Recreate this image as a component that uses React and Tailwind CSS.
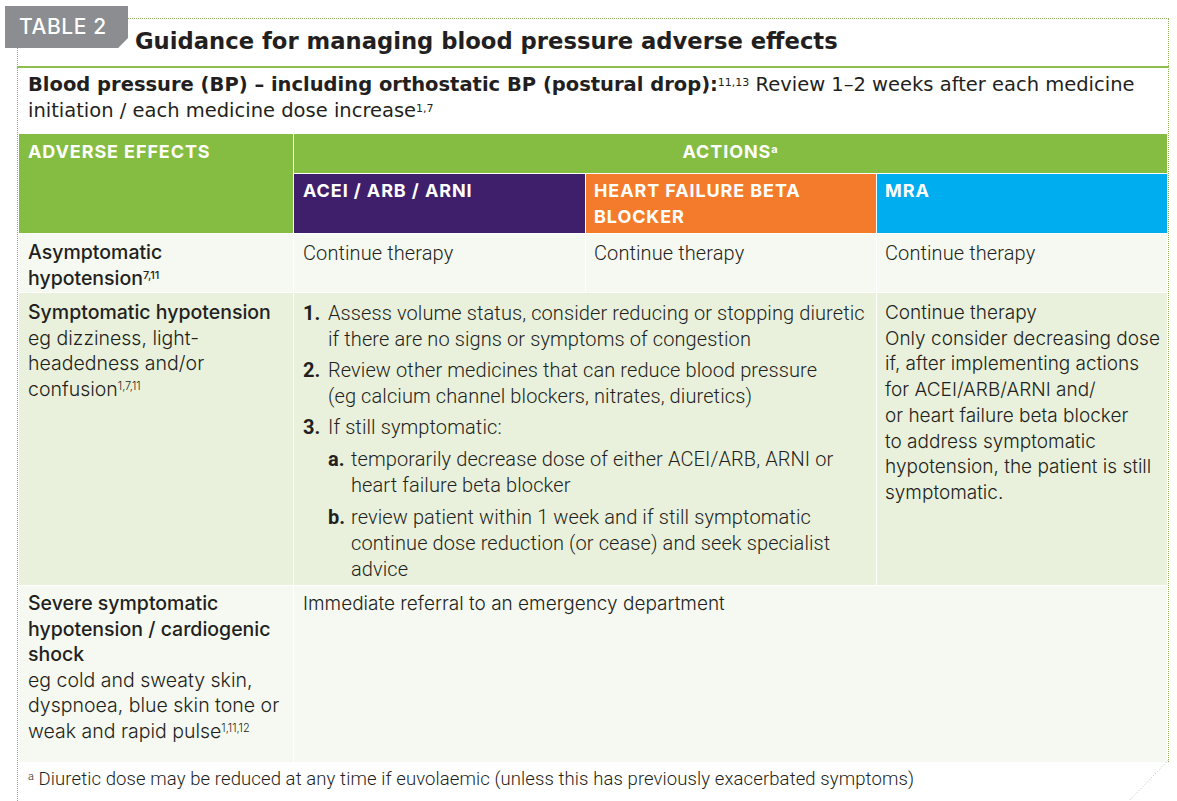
const W = "[font-family:Inter,sans-serif]";
const D = "[font-family:'DejaVu_Sans',sans-serif]";
const N = "[font-family:Roboto,sans-serif]";
const H = "[font-family:Inter,sans-serif] font-bold text-[18px] tracking-[0.9px] leading-[26px] text-white";

function Sup({ children, className = "" }) {
  return <sup className={"text-[11px] " + className}>{children}</sup>;
}

function Item({ num, children, sub = false }) {
  return (
    <div className={sub ? "flex mt-[6px] pl-[25px]" : "flex mt-[5px] first:mt-0"}>
      <div className={sub ? "w-[23px] shrink-0 font-bold" : "w-[25px] shrink-0 font-bold"}>{num}</div>
      <div className="whitespace-nowrap">{children}</div>
    </div>
  );
}

export default function App() {
  return (
    <div className="relative w-[1177px] h-[801px] bg-white overflow-hidden text-[#231f20]">
      <div className="pt-[18px]">
        <div className="ml-[17px] w-[1152px] h-[783px] border-l border-dotted border-[#8fb35e]">
          <div className="w-[1151px] border-t border-r border-dotted border-[#8fb35e]">
            <div className={"h-[47px] pl-[117px] pt-[8px] text-[22.7px] leading-[28px] font-bold whitespace-nowrap " + D}>
              Guidance for managing blood pressure adverse effects
            </div>
            <div className="h-[2px] bg-[#8dbf4e] -ml-px -mr-px"></div>
            <div className={"pt-[4px] pl-[10px] text-[19.5px] leading-[26px] whitespace-nowrap " + D}>
              <span className="font-bold">Blood pressure (BP) – including orthostatic BP (postural drop):</span>
              <Sup>11,13</Sup>
              <span className="font-normal"> Review 1–2 weeks after each medicine</span>
              <br />
              <span className="font-normal">initiation / each medicine dose increase</span>
              <Sup>1,7</Sup>
            </div>
            <div className="mt-[10px] ml-px w-[1148px] grid grid-cols-[274px_291px_290px_290px] grid-rows-[39px_59px_58px_292px_176px] gap-x-px gap-y-px">
              <div className={"row-span-2 bg-[#84bd41] pl-[9px] pt-[5px] " + H}>ADVERSE EFFECTS</div>
              <div className={"col-span-3 bg-[#84bd41] pt-[5px] text-center " + H}>
                ACTIONS<Sup className="font-bold">a</Sup>
              </div>
              <div className={"bg-[#3f1f6b] pl-[9px] pt-[4px] " + H}>ACEI / ARB / ARNI</div>
              <div className={"bg-[#f47b2b] pl-[8px] pt-[4px] " + H}>
                HEART FAILURE BETA
                <br />
                BLOCKER
              </div>
              <div className={"bg-[#00adef] pl-[8px] pt-[4px] " + H}>MRA</div>

              <div className={"bg-[#f6f9f1] pl-[9px] pt-[6px] text-[19.5px] leading-[25.5px] font-medium " + W}>
                Asymptomatic
                <br />
                hypotension<Sup>7,11</Sup>
              </div>
              <div className={"bg-[#f6f9f1] pl-[9px] pt-[6px] text-[20px] tracking-[0.1px] leading-[26px] font-light " + N}>Continue therapy</div>
              <div className={"bg-[#f6f9f1] pl-[8px] pt-[6px] text-[20px] tracking-[0.1px] leading-[26px] font-light " + N}>Continue therapy</div>
              <div className={"bg-[#f6f9f1] pl-[8px] pt-[6px] text-[20px] tracking-[0.1px] leading-[26px] font-light " + N}>Continue therapy</div>

              <div className={"bg-[#e9f1dd] pl-[9px] pt-[7px] text-[19.5px] leading-[25.6px] " + W}>
                <div className="font-medium">Symptomatic hypotension</div>
                <div className="font-light">
                  eg dizziness, light-
                  <br />
                  headedness and/or
                  <br />
                  confusion<Sup>1,7,11</Sup>
                </div>
              </div>
              <div className={"col-span-2 bg-[#e9f1dd] pl-[9px] pt-[7px] text-[20px] tracking-[0.1px] leading-[26px] font-light " + N}>
                <Item num="1.">
                  Assess volume status, consider reducing or stopping diuretic
                  <br />
                  if there are no signs or symptoms of congestion
                </Item>
                <Item num="2.">
                  Review other medicines that can reduce blood pressure
                  <br />
                  (eg calcium channel blockers, nitrates, diuretics)
                </Item>
                <Item num="3.">If still symptomatic:</Item>
                <Item num="a." sub>
                  temporarily decrease dose of either ACEI/ARB, ARNI or
                  <br />
                  heart failure beta blocker
                </Item>
                <Item num="b." sub>
                  review patient within 1 week and if still symptomatic
                  <br />
                  continue dose reduction (or cease) and seek specialist
                  <br />
                  advice
                </Item>
              </div>
              <div className={"bg-[#e9f1dd] pl-[8px] pt-[7px] text-[19px] leading-[25.7px] font-light whitespace-nowrap " + W}>
                Continue therapy
                <br />
                Only consider decreasing dose
                <br />
                if, after implementing actions
                <br />
                for ACEI/ARB/ARNI and/
                <br />
                or heart failure beta blocker
                <br />
                to address symptomatic
                <br />
                hypotension, the patient is still
                <br />
                symptomatic.
              </div>

              <div className={"bg-[#f6f9f1] pl-[9px] pt-[5px] text-[19.5px] leading-[25.6px] " + W}>
                <div className="font-medium">
                  Severe symptomatic
                  <br />
                  hypotension / cardiogenic
                  <br />
                  shock
                </div>
                <div className="font-light">
                  eg cold and sweaty skin,
                  <br />
                  dyspnoea, blue skin tone or
                  <br />
                  weak and rapid pulse<Sup>1,11,12</Sup>
                </div>
              </div>
              <div className={"col-span-3 bg-[#f6f9f1] pl-[9px] pt-[5px] text-[19px] leading-[26px] font-light " + W}>
                Immediate referral to an emergency department
              </div>
            </div>
          </div>
          <div className={"mt-[6px] pl-[10px] text-[18.5px] tracking-[0.1px] leading-[22px] font-light whitespace-nowrap " + N}>
            <Sup>a</Sup> Diuretic dose may be reduced at any time if euvolaemic (unless this has previously exacerbated symptoms)
          </div>
        </div>
      </div>

      <div className={"absolute left-[5px] top-[6px] w-[123px] h-[42px] bg-[#8b8d90] [clip-path:polygon(0_0,100%_0,100%_76%,92%_100%,0_100%)] flex items-center pl-[14px] text-white text-[21px] tracking-[0.6px] font-medium " + W}>
        TABLE 2
      </div>

      <svg className="absolute left-[1128px] top-[760px]" width="42" height="42" viewBox="0 0 42 42">
        <line x1="40.5" y1="0" x2="0" y2="42" stroke="#b9c6ad" strokeWidth="1" strokeDasharray="1 2" />
      </svg>
    </div>
  );
}
